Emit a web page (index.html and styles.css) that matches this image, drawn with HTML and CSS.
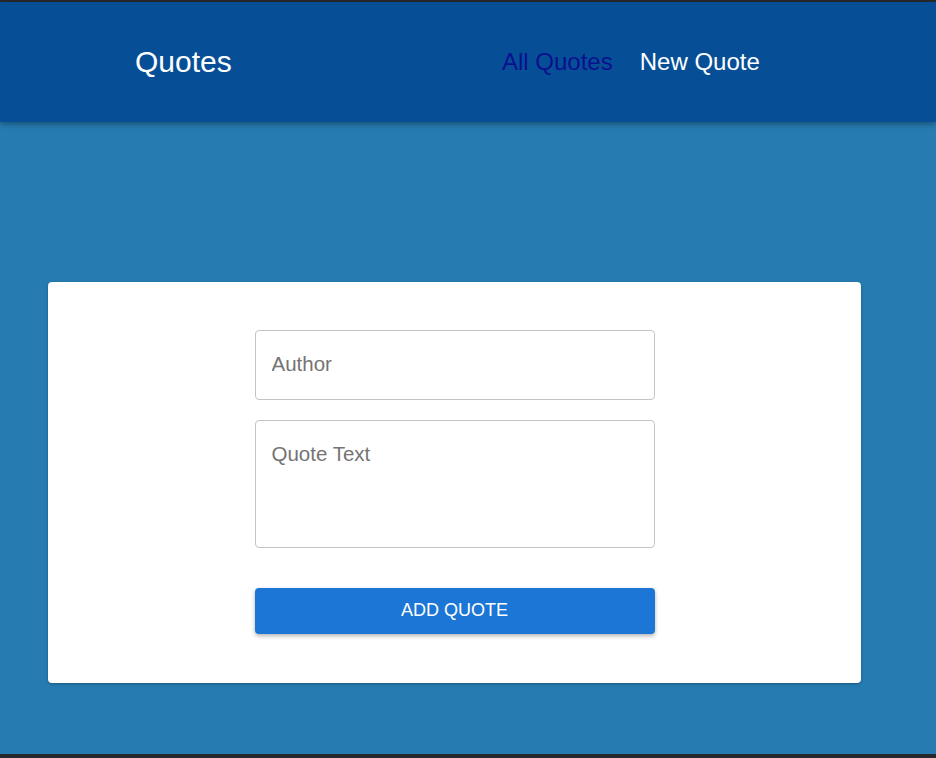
FILE: index.html
```html
<!DOCTYPE html>
<html lang="en">
<head>
<meta charset="utf-8">
<title>Quotes</title>
<link rel="stylesheet" href="styles.css">
</head>
<body>
<div class="page">
  <header class="header">
    <div class="logo">Quotes</div>
    <nav class="nav">
      <a class="nav-link active" href="#">All Quotes</a>
      <a class="nav-link" href="#">New Quote</a>
    </nav>
  </header>
  <main class="main">
    <form class="card">
      <div class="field">
        <input class="input" type="text" placeholder="Author">
      </div>
      <div class="field">
        <textarea class="input textarea" placeholder="Quote Text"></textarea>
      </div>
      <button class="btn" type="button">ADD QUOTE</button>
    </form>
  </main>
</div>
</body>
</html>
```

FILE: styles.css
```css
* { box-sizing: border-box; }
html, body { margin: 0; padding: 0; }
body {
  background: #27292d;
  font-family: "Liberation Sans", Arial, sans-serif;
  height: 758px;
  overflow: hidden;
}
.page {
  margin-top: 2px;
  height: 752px;
  background: #267cb1;
  display: flex;
  flex-direction: column;
}
.header {
  height: 120px;
  background: #064f97;
  box-shadow: 0 2px 6px rgba(0,0,0,0.35);
  display: flex;
  align-items: center;
  padding: 0 0 0 135px;
  position: relative;
  z-index: 1;
}
.logo {
  color: #ffffff;
  font-size: 30px;
  width: 367px;
}
.nav {
  display: flex;
  gap: 27px;
}
.nav-link {
  color: #ffffff;
  font-size: 24px;
  text-decoration: none;
}
.nav-link.active { color: #0b108e; }
.main {
  padding: 160px 75px 0 48px;
}
.card {
  background: #ffffff;
  border-radius: 4px;
  box-shadow: 0 1px 3px rgba(0,0,0,0.3);
  height: 401px;
  padding: 48px 0 0;
  display: flex;
  flex-direction: column;
  align-items: center;
}
.field { margin-bottom: 20px; }
.input {
  display: block;
  width: 400px;
  height: 70px;
  border: 1px solid #c4c4c4;
  border-radius: 4px;
  padding: 0 16px 3px;
  font-family: "Liberation Sans", Arial, sans-serif;
  font-size: 20.5px;
  color: #333;
  outline: none;
}
.input::placeholder { color: #747474; }
.textarea {
  height: 128px;
  padding: 21px 16px;
  resize: none;
}
.btn {
  margin-top: 20px;
  width: 400px;
  height: 46px;
  background: #1c76d6;
  color: #ffffff;
  border: none;
  border-radius: 4px;
  font-family: "Liberation Sans", Arial, sans-serif;
  font-size: 18px;
  padding-bottom: 2px;
  box-shadow: 0 2px 4px rgba(0,0,0,0.3);
}
```
